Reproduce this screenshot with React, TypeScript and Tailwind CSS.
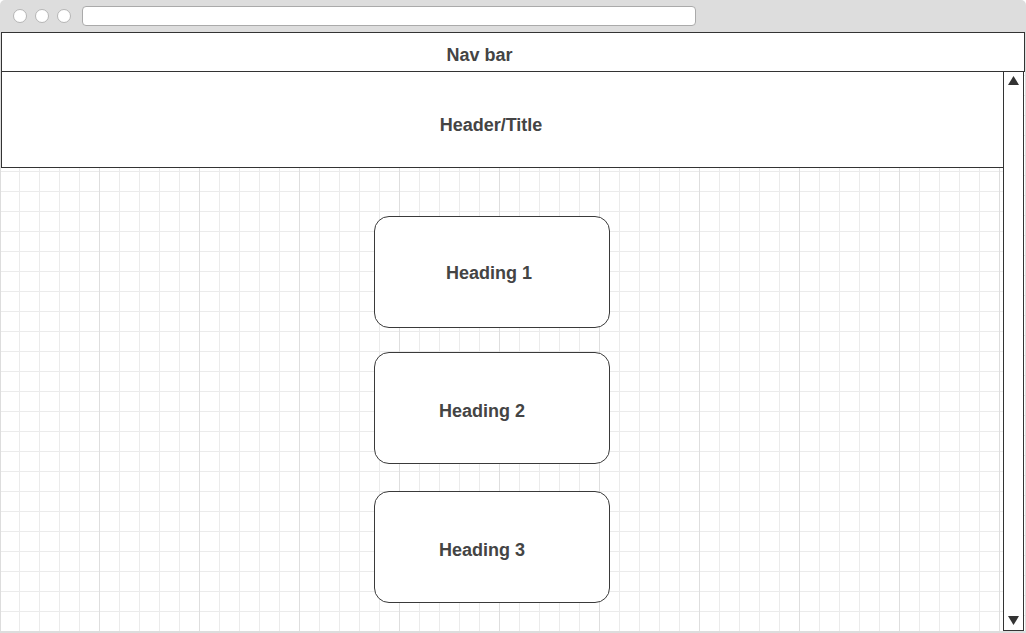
const grid =
  "bg-[linear-gradient(to_right,#dedede_1px,transparent_1px),linear-gradient(to_right,#ebebeb_1px,transparent_1px),linear-gradient(to_bottom,#ebebeb_1px,transparent_1px)] bg-[length:100px_100px,20px_20px,20px_20px] bg-[position:98px_0,18px_3px,18px_3px]";

function Card({ label, shift, className }: { label: string; shift: string; className: string }) {
  return (
    <div
      className={`w-[236px] h-[112px] ml-[373px] rounded-[15px] border border-[#3a3a3a] bg-white flex items-center justify-center ${className}`}
    >
      <span className={`text-[18px] font-bold text-[#444] ${shift}`}>{label}</span>
    </div>
  );
}

function Arrow({ up }: { up?: boolean }) {
  return (
    <svg width="11" height="9" viewBox="0 0 11 9">
      <path d={up ? "M5.5 0 L11 9 L0 9 Z" : "M0 0 L11 0 L5.5 9 Z"} fill="#333" />
    </svg>
  );
}

export default function App() {
  return (
    <div className="w-[1026px] h-[633px] bg-[#dddddd] rounded-t-[5px] flex flex-col overflow-hidden font-['Liberation_Sans',Arial,sans-serif]">
      {/* window chrome */}
      <div className="h-8 flex items-center pl-[13px] shrink-0">
        <div className="flex gap-2">
          <span className="w-[14px] h-[14px] rounded-full bg-white border border-[#b5b5b5]" />
          <span className="w-[14px] h-[14px] rounded-full bg-white border border-[#b5b5b5]" />
          <span className="w-[14px] h-[14px] rounded-full bg-white border border-[#b5b5b5]" />
        </div>
        <div className="ml-[11px] mt-[-1px] w-[614px] h-[20px] rounded-[4px] bg-white border border-[#aaaaaa]" />
      </div>

      <div className="flex-1 mx-px mb-[2px] flex flex-col">
        <div className="h-10 shrink-0 border border-[#333] bg-white flex items-center justify-center pr-[67px]">
          <span className="text-[18px] font-bold text-[#444] mt-[7px]">Nav bar</span>
        </div>

        <div className="flex-1 flex min-h-0">
          <div className="flex-1 flex flex-col">
            <div className="h-[96px] shrink-0 border-l border-b border-[#333] bg-white flex items-center justify-center pr-[23px]">
              <span className="text-[18px] font-bold text-[#444] mt-[12px]">Header/Title</span>
            </div>
            <div className={`flex-1 flex flex-col items-start bg-white ${grid}`}>
              <Card label="Heading 1" shift="mr-[6px] mt-[2px]" className="mt-[48px]" />
              <Card label="Heading 2" shift="mr-[20px] mt-[6px]" className="mt-[24px]" />
              <Card label="Heading 3" shift="mr-[20px] mt-[6px]" className="mt-[27px]" />
            </div>
          </div>
          <div className="w-[21px] border-x border-b border-[#333] bg-white flex flex-col items-center justify-between pt-[4px] pb-[5px]">
            <Arrow up />
            <Arrow />
          </div>
          <div className={`w-px bg-white ${grid}`} />
        </div>
      </div>
    </div>
  );
}
